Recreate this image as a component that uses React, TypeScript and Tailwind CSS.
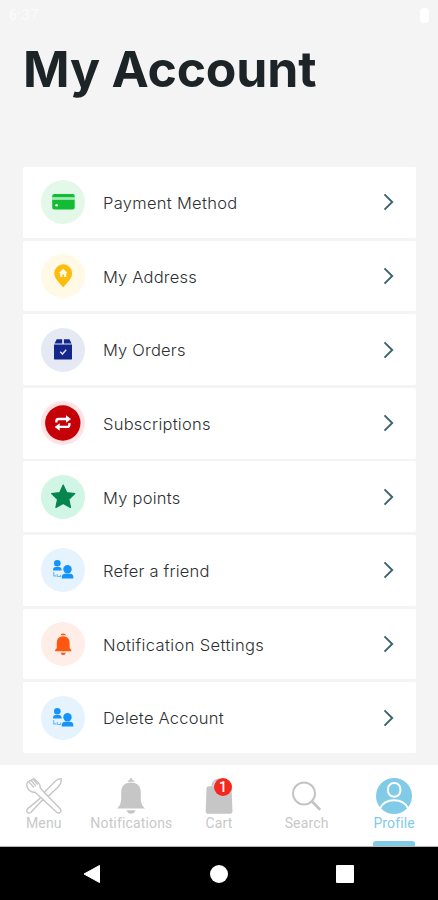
import type { ReactNode } from 'react';

interface AccountItem {
  label: string;
  circle: string;
  icon: ReactNode;
  spacing: string;
}

const CardIcon = () => (
  <svg width="44" height="44" viewBox="0 0 44 44">
    <path d="M11.2 17.400v-1.500a2 2 0 0 1 2-2h18.500a2 2 0 0 1 2 2v1.500z" fill="#12bd35" />
    <path d="M11.200 19.600h22.500v8a2 2 0 0 1-2 2h-18.500a2 2 0 0 1-2-2z" fill="#12bd35" />
    <rect x="11.200" y="17.400" width="22.500" height="2.200" fill="#a5e8b3" />
    <circle cx="15.600" cy="25.200" r="1.300" fill="#fff" />
  </svg>
);

const PinIcon = () => (
  <svg width="44" height="44" viewBox="0 0 44 44">
    <path d="M22.200 10.300a8.900 8.900 0 0 0-8.900 8.900c0 5.300 4.500 9 8.900 14 4.400-5 8.900-8.700 8.900-14a8.900 8.900 0 0 0-8.900-8.900z" fill="#fdbd0c" />
    <path d="M22.200 14.700l-4.300 4.200h1.200v4h2.200v-2.500h1.800v2.500h2.200v-4h1.200z" fill="#fffbe8" />
  </svg>
);

const OrdersIcon = () => (
  <svg width="44" height="44" viewBox="0 0 44 44" fill="#14278b">
    <path d="M15.700 11.200h5.500v4.200h-7.600z" />
    <path d="M22.900 11.200h5.500l2.200 4.200h-7.700z" />
    <path d="M13 16.400h18v14a1.200 1.200 0 0 1-1.200 1.200H14.200a1.200 1.200 0 0 1-1.200-1.200z" />
    <path d="M19.200 23.800l2.300 2.300 3.700-4.300" fill="none" stroke="#d5daf0" strokeWidth="1.500" />
  </svg>
);

const RepeatIcon = () => (
  <svg width="44" height="44" viewBox="0 0 44 44">
    <circle cx="21.800" cy="22" r="17.700" fill="#c50006" />
    <g fill="none" stroke="#fff" strokeWidth="2.300">
      <path d="M15.400 21.600v-1.500q0-2.100 2.200-2.100h7.900" />
      <path d="M28.400 21.900v1.500q0 2.500-2.200 2.500h-7.900" />
    </g>
    <path d="M25 14.200l5 3.800-5 3.700zM18.700 22.200l-5 3.800 5 3.800z" fill="#fff" />
  </svg>
);

const StarIcon = () => (
  <svg width="44" height="44" viewBox="0 0 44 44">
    <path
      d="M22.200 10l3.500 7.700 8.100.9-6 5.600 1.700 8.200-7.300-4-7.300 4 1.700-8.200-6-5.600 8.100-.900z"
      fill="#06864f"
      stroke="#06864f"
      strokeWidth="1.200"
      strokeLinejoin="round"
    />
  </svg>
);

const FriendsIcon = () => (
  <svg width="44" height="44" viewBox="0 0 44 44" fill="#1493fb">
    <circle cx="16.300" cy="15.300" r="3.300" />
    <path d="M12 22.400v-1q0-2.100 2.300-2.400h4q2.300.3 2.300 2.400v1z" />
    <circle cx="26.500" cy="21.200" r="4.200" />
    <path d="M20.800 30.600v-1.500q0-3.100 3.200-3.400h5.200q3.100.3 3.100 3.400v1.500z" />
    <g fill="none" stroke="#6db9fa" strokeWidth="1.100">
      <path d="M12.700 24v3.900h2.500M16.300 26v2.500h3.200v-1.800" />
    </g>
  </svg>
);

const AlertIcon = () => (
  <svg width="44" height="44" viewBox="0 0 44 44" fill="#ff5711">
    <path d="M19.500 13.200q0-1.800 2.700-1.800t2.700 1.800z" />
    <path d="M14 29.300v-1l1.800-2.300v-5.200q0-6.100 6.400-6.500 6.400.400 6.400 6.500V26l1.800 2.300v1z" />
    <path d="M19.500 30.800h5.400q-.5 2.200-2.700 2.200t-2.700-2.200z" />
  </svg>
);

const items: AccountItem[] = [
  { label: 'Payment Method', circle: 'bg-[#e3f8e8]', icon: <CardIcon />, spacing: 'tracking-[0.3px]' },
  { label: 'My Address', circle: 'bg-[#fff9e5]', icon: <PinIcon />, spacing: 'tracking-[0.2px]' },
  { label: 'My Orders', circle: 'bg-[#e5e9f4]', icon: <OrdersIcon />, spacing: 'tracking-[0.2px]' },
  { label: 'Subscriptions', circle: 'bg-[#ffe3e4]', icon: <RepeatIcon />, spacing: 'tracking-[0.25px]' },
  { label: 'My points', circle: 'bg-[#d1f6e5]', icon: <StarIcon />, spacing: 'tracking-[0.25px]' },
  { label: 'Refer a friend', circle: 'bg-[#e5f3ff]', icon: <FriendsIcon />, spacing: 'tracking-[0.2px]' },
  { label: 'Notification Settings', circle: 'bg-[#ffeee7]', icon: <AlertIcon />, spacing: 'tracking-[0.37px]' },
  { label: 'Delete Account', circle: 'bg-[#e5f3ff]', icon: <FriendsIcon />, spacing: 'tracking-[0.25px]' },
];

const MenuIcon = () => (
  <svg width="36" height="36" viewBox="0 0 36 36" fill="#fff" stroke="#c6c6c6" strokeWidth="1.400" strokeLinejoin="round">
    <path d="M35.200.8q-3-.5-6 2.500L14.300 18.500l-.4 2.100L1.500 30.900q-1.600 1.900.1 3.500 1.600 1.500 3.400-.1L16 22.500l2-.3L32.400 8.700q3.500-3.500 2.800-7.900z" />
    <path d="M.9 5.700q-.5 4.800 3.600 7.500 2.300 1.400 4.600 1l4.100 3.800 17.500 16.300q1.800 1.500 3.500-.1 1.600-1.700 0-3.500L17.800 13.900 14.100 9.700q.4-3-1.500-4.800L8.500.9q-1.100-.4-1.500.4L2.900 3.200Q1.200 3.900.9 5.700z" />
    <path d="M7 1.300l4.800 5.300M4.900 2.300l5 5.800M2.900 3.900l4.900 5.600" fill="none" />
  </svg>
);

const BellIcon = () => (
  <svg width="36" height="36" viewBox="0 0 36 36" fill="#c6c6c6">
    <path d="M14.300 3.700q.3-1.600 2.300-1.800Q16.600 0 18 0t1.400 1.900q2 .2 2.300 1.800z" />
    <path d="M18 4.600c-6.500 0-9.800 4-9.800 10v5.600c0 4.700-1.400 7.900-4.200 10.300h28c-2.800-2.400-4.200-5.600-4.200-10.300v-5.600c0-6-3.300-10-9.800-10z" />
    <path d="M13.300 32.300h9.400q-1.600 3.500-4.700 3.500t-4.700-3.500z" />
  </svg>
);

const CartIcon = () => (
  <div className="relative h-9 w-9">
    <svg width="36" height="36" viewBox="0 0 36 36">
      <path d="M11.500 10V8a6.500 6.500 0 0 1 13 0V10" fill="none" stroke="#c6c6c6" strokeWidth="2" />
      <path d="M7.500 8.200h21q2 0 2.100 2l.9 22.700q0 2.800-2.700 2.800H7.400q-2.700 0-2.700-2.800l.8-22.700q.1-2 2-2z" fill="#c6c6c6" />
    </svg>
    <span className="absolute top-0 left-[13px] flex h-[18px] w-[18px] items-center justify-center rounded-full bg-[#f1291f] text-[14px] leading-none font-medium text-white">
      1
    </span>
  </div>
);

const SearchIcon = () => (
  <svg width="36" height="36" viewBox="0 0 36 36" fill="none" stroke="#c3c3c3">
    <circle cx="15" cy="15.500" r="11" strokeWidth="1.900" />
    <path d="M23 23.500l7.500 7.500" strokeWidth="2.600" strokeLinecap="round" />
  </svg>
);

const ProfileIcon = () => (
  <svg width="36" height="36" viewBox="0 0 36 36">
    <circle cx="18" cy="18" r="18" fill="#82cbe8" />
    <g fill="none" stroke="#fff" strokeWidth="2">
      <rect x="12" y="5" width="12.400" height="13.800" rx="6" />
      <path d="M4 30.500C9 19.500 27 19.500 32.200 30.500" />
    </g>
  </svg>
);

const tabs = [
  { label: 'Menu', icon: <MenuIcon />, active: false },
  { label: 'Notifications', icon: <BellIcon />, active: false },
  { label: 'Cart', icon: <CartIcon />, active: false },
  { label: 'Search', icon: <SearchIcon />, active: false },
  { label: 'Profile', icon: <ProfileIcon />, active: true },
];

export default function App() {
  return (
    <div className="flex h-[900px] w-[438px] flex-col overflow-hidden bg-[#f4f4f4] font-['Inter',sans-serif]">
      <div className="flex h-[30px] shrink-0 items-center justify-between pr-[9px] pl-[9px]">
        <span className="font-['Roboto',sans-serif] text-[14px] tracking-[0.8px] text-[#fbfbfb]">6:37</span>
        <span className="h-[15px] w-[9px] rounded-[4px] bg-white" />
      </div>

      <header className="h-[137px] shrink-0 pl-[23px]">
        <h1 className="pt-[9px] text-[50px] leading-[60px] font-bold tracking-[-0.200px] whitespace-nowrap text-[#1c2427]">
          My Account
        </h1>
      </header>

      <main className="flex h-[598px] shrink-0 flex-col gap-[2.800px] px-[23px]">
        {items.map((item) => (
          <button
            key={item.label}
            className="flex h-[70.800px] w-[393px] shrink-0 items-center rounded-[2px] bg-white pr-[22px] pl-[18px] text-left"
          >
            <span className={`h-11 w-11 shrink-0 rounded-full ${item.circle}`}>{item.icon}</span>
            <span
              className={`ml-[18px] flex-1 pt-[1.5px] text-[16.5px] leading-6 font-light text-[#2c3032] ${item.spacing}`}
            >
              {item.label}
            </span>
            <svg width="11" height="18" viewBox="0 0 11 18" fill="none" stroke="#3b6270" strokeWidth="1.900">
              <path d="M1.500 1.300l7.700 7.700-7.700 7.700" />
            </svg>
          </button>
        ))}
      </main>

      <nav className="flex h-[82px] shrink-0 border-b border-[#b5b5b5] bg-white font-['Roboto',sans-serif]">
        {tabs.map((tab) => (
          <button key={tab.label} className="flex flex-1 flex-col items-center pt-[13px]">
            {tab.icon}
            <span
              className={`text-[14px] leading-[18px] tracking-[0.15px] ${tab.active ? 'text-[#82cbe8]' : 'text-[#c8c8c8]'}`}
            >
              {tab.label}
            </span>
            {tab.active && <span className="mt-auto h-[5px] w-[42px] rounded-t-[3px] bg-[#82cbe8]" />}
          </button>
        ))}
      </nav>

      <footer className="flex h-[53px] shrink-0 items-center justify-between bg-black pr-[84px] pl-[83px]">
        <svg width="18" height="20" viewBox="0 0 18 20">
          <path d="M1 10L16.500 1.500v17z" fill="#fff" stroke="#fff" strokeWidth="1" strokeLinejoin="round" />
        </svg>
        <span className="h-[18px] w-[18px] rounded-full bg-white" />
        <span className="h-[18px] w-[18px] rounded-[1px] bg-white" />
      </footer>
    </div>
  );
}
